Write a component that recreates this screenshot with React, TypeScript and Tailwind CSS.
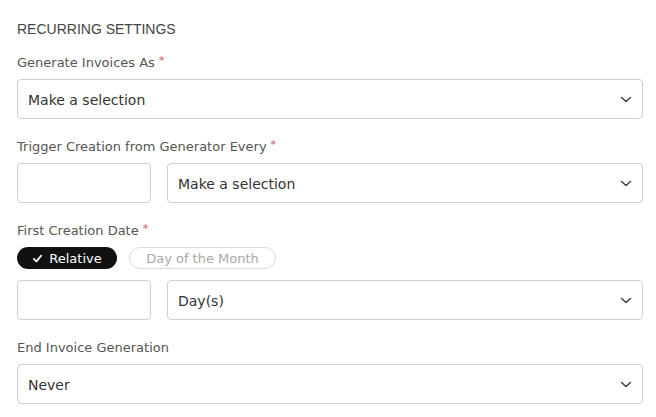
const font = { fontFamily: '"DejaVu Sans", "Open Sans", sans-serif' };

function Label({ text, required }: { text: string; required?: boolean }) {
  return (
    <div className="flex h-[18px] items-start pt-px text-[13px] leading-[18px] text-[#555]">
      <span>{text}</span>
      {required ? (
        <span className="ml-[4px] text-[11px] leading-[14px] text-[#d9534f]">*</span>
      ) : null}
    </div>
  );
}

function Chevron() {
  return (
    <svg viewBox="0 0 12 7" className="h-[7px] w-[12px]" fill="none" stroke="#444" strokeWidth={1.6} strokeLinecap="round" strokeLinejoin="round">
      <path d="M1.5 1.5 L6 5.5 L10.5 1.5" />
    </svg>
  );
}

function SelectBox({ value, className = "" }: { value: string; className?: string }) {
  return (
    <div
      className={`flex h-10 items-center justify-between rounded-[4px] border border-[#cfcfcf] bg-white pl-[10px] pr-[10px] ${className}`}
    >
      <span className="pt-[2px] text-[14px] text-[#333]">{value}</span>
      <Chevron />
    </div>
  );
}

function InputBox() {
  return <div className="h-10 w-[134px] shrink-0 rounded-[4px] border border-[#cfcfcf] bg-white" />;
}

export default function App() {
  return (
    <div className="min-h-[417px] bg-white pl-[17px] pr-[13px] pt-[18px]" style={font}>
      <div
        className="h-5 pt-px text-[14px] leading-5 text-[#444]"
        style={{ fontFamily: '"Liberation Sans", Arial, sans-serif' }}
      >
        RECURRING SETTINGS
      </div>

      <div className="mt-[15px]">
        <Label text="Generate Invoices As" required />
      </div>
      <SelectBox value="Make a selection" className="mt-2" />

      <div className="mt-[18px]">
        <Label text="Trigger Creation from Generator Every" required />
      </div>
      <div className="mt-2 flex gap-4">
        <InputBox />
        <SelectBox value="Make a selection" className="flex-1" />
      </div>

      <div className="mt-[18px]">
        <Label text="First Creation Date" required />
      </div>
      <div className="mt-2 flex gap-3">
        <button className="flex h-[22px] w-[100px] items-center justify-center gap-[6px] rounded-full bg-[#111] pt-px text-[13px] text-white">
          <svg viewBox="0 0 12 12" className="size-[11px]" fill="none" stroke="white" strokeWidth={2} strokeLinecap="round" strokeLinejoin="round">
            <path d="M2 6.5 L4.8 9.2 L10 3" />
          </svg>
          Relative
        </button>
        <button className="flex h-[22px] w-[147px] items-center justify-center rounded-full border border-[#dcdcdc] bg-white pt-px text-[13px] text-[#a8a8a8]">
          Day of the Month
        </button>
      </div>
      <div className="mt-[11px] flex gap-4">
        <InputBox />
        <SelectBox value="Day(s)" className="flex-1" />
      </div>

      <div className="mt-[18px]">
        <Label text="End Invoice Generation" />
      </div>
      <SelectBox value="Never" className="mt-2" />
    </div>
  );
}
